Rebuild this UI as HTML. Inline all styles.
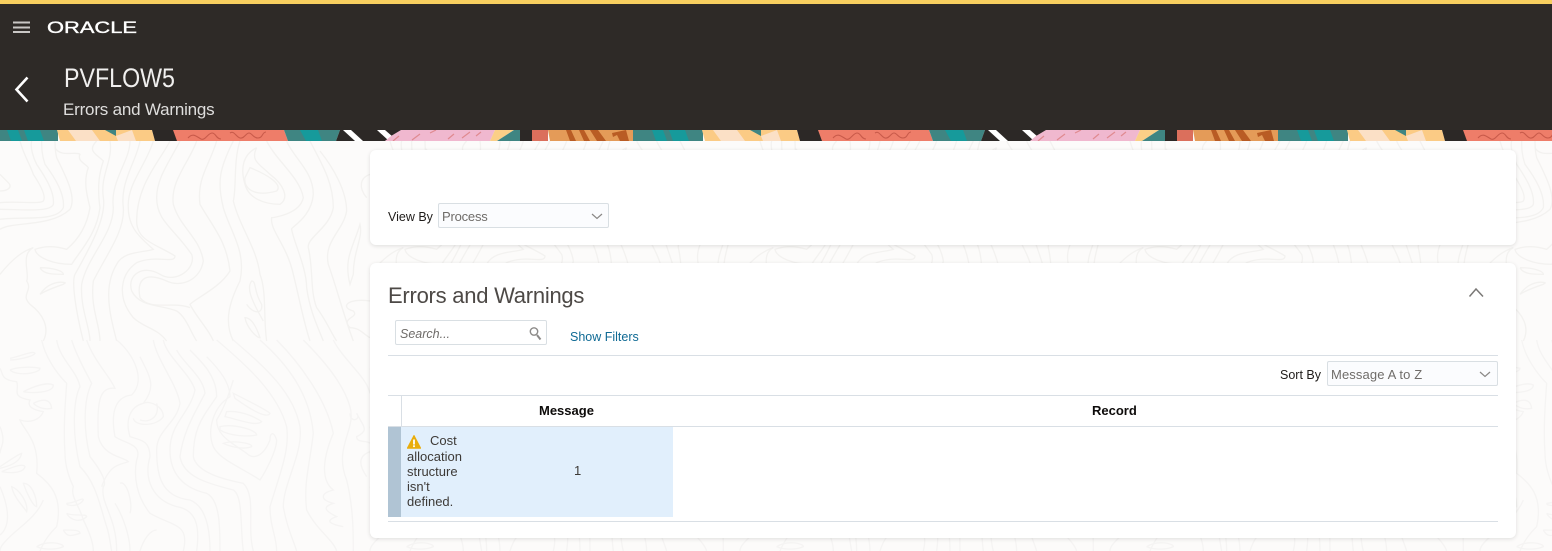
<!DOCTYPE html>
<html><head><meta charset="utf-8"><style>
html,body{margin:0;padding:0;width:1552px;height:551px;overflow:hidden;background:#fcfbfa;font-family:"Liberation Sans",sans-serif}
.a{position:absolute;white-space:nowrap}
.card{position:absolute;left:370px;width:1146px;background:#fff;border-radius:6px;box-shadow:0 1px 4px rgba(0,0,0,.12)}
.sel{position:absolute;box-sizing:border-box;background:#fbfcfe;border:1px solid #d9dfe3;border-radius:2px;color:#6f6c69;font-size:13px}
.ln{position:absolute;background:#d9dfe5;height:1px}
</style></head><body>
<svg class="a" style="left:0;top:141px" width="1552" height="410" fill="none" stroke="#f3f2f0" stroke-width="1.2">
<defs>
<g id="c1" transform="scale(.3333)" stroke-width="4">
<path d="M0 185C50 180 120 190 130 180C140 165 120 130 100 100C90 70 70 40 60 0"/>
<path d="M0 205C60 205 150 215 160 190C165 150 130 100 110 70C100 50 90 20 95 0"/>
<path d="M0 235C60 225 170 245 190 200C195 160 165 110 135 70C125 40 125 20 125 0"/>
<path d="M0 265C40 240 150 260 210 205C230 170 200 110 170 50C165 30 165 15 165 0"/>
<path d="M0 100L25 125C40 140 20 150 0 150"/>
<path d="M165 20C180 50 230 30 240 40C230 60 260 70 265 80C250 120 260 160 270 200C260 260 230 300 200 325C150 310 120 320 105 325C110 350 160 370 215 370C240 330 290 280 300 200C290 130 300 90 310 60C290 40 260 30 290 0"/>
<path d="M330 0C340 60 300 100 310 170C320 230 270 320 225 400C215 420 225 500 250 600"/>
<path d="M390 0C390 60 330 120 340 200C340 280 260 350 245 430C240 500 270 560 270 600"/>
<path d="M420 0C410 60 360 120 370 200C375 270 320 340 280 420C270 500 300 550 300 600"/>
<path d="M460 0C440 70 380 130 385 200C385 260 420 290 460 325C430 335 370 330 350 370C320 420 320 480 340 560L350 600"/>
<path d="M510 0C480 60 410 130 410 240C410 300 470 310 525 345C525 370 470 340 410 365C360 400 350 470 400 530C430 560 470 560 500 600"/>
<path d="M540 0C510 60 470 110 470 170C470 240 520 260 575 340C590 380 530 430 480 400C430 370 380 400 395 450C420 500 480 490 530 510C560 530 570 570 590 600"/>
<path d="M590 0C570 60 510 120 520 190C540 260 600 290 610 360C600 420 540 440 500 420C430 390 410 420 420 470C450 510 520 480 570 500"/>
<path d="M650 0C630 70 590 110 600 190C640 260 680 300 690 390C660 440 590 470 570 490C590 530 630 570 640 600"/>
<path d="M700 0C660 80 650 120 670 200C690 270 740 330 720 420C690 480 670 540 700 600"/>
<path d="M720 0C700 60 710 140 700 180C720 260 770 320 780 400C800 450 790 530 800 600"/>
<path d="M770 20C730 40 720 80 735 130C745 170 790 190 840 190C870 170 850 130 810 100C780 70 750 60 770 20"/>
<path d="M735 110C730 140 760 170 830 150C850 130 800 100 750 80Z"/>
<path d="M800 0C830 60 900 110 910 170C900 220 820 230 815 230C810 270 860 310 880 400C900 480 910 540 930 600"/>
<path d="M860 0C880 50 940 90 940 160C935 230 870 260 875 265C880 300 920 380 920 440C930 510 950 550 970 600"/>
<path d="M930 0C960 60 1000 120 1000 200C990 260 920 290 925 320C940 380 930 450 950 500C980 540 990 570 1010 600"/>
<path d="M960 30C1000 80 1040 150 1040 210C1030 270 970 300 985 370C1010 440 1030 520 1060 600"/>
<path d="M1110 100C1080 110 1075 140 1100 170"/>
<path d="M1050 430C1030 350 1060 320 1080 250C1090 290 1060 330 1060 400Z"/>
<path d="M1110 480C1040 470 1020 500 1060 510C1080 530 1020 530 1050 560C1080 560 1090 580 1110 590"/>
<path d="M0 400C40 350 70 330 100 320C60 340 90 400 80 420C100 450 60 460 90 490C130 520 150 560 130 600"/>
<path d="M120 380C160 380 190 390 190 400C160 400 130 400 120 380"/>
<path d="M120 460C150 440 200 430 195 425C170 420 140 430 120 460"/>
<path d="M740 490C760 520 790 520 785 490C760 450 770 420 755 420C740 440 750 470 790 540"/>
<path d="M735 530C740 560 770 590 780 590C770 560 755 530 735 530Z"/>
</g>
<g id="c2" transform="translate(0,199) scale(.3333)" stroke="#f5f4f3" stroke-width="4">
<path d="M30 60C50 60 100 50 105 40C100 30 60 50 30 55"/>
<path d="M30 90C50 110 120 100 120 85C100 80 50 80 30 90"/>
<path d="M70 155C90 160 160 160 160 135C140 125 100 140 70 155"/>
<path d="M100 190C120 180 150 170 155 205C130 210 110 200 100 190"/>
<path d="M0 85C10 100 0 120 50 125C60 150 30 170 90 180C80 200 100 210 130 215C120 240 90 250 60 240C70 270 120 300 110 400C150 430 190 470 170 560C140 590 130 610 120 633"/>
<path d="M125 0C135 50 170 100 200 130C195 200 190 270 195 340C195 380 210 420 220 440C210 470 240 500 250 540C270 580 280 610 280 633"/>
<path d="M170 0C180 60 230 90 240 140C220 180 215 280 240 380C290 430 300 500 320 560C330 590 330 610 335 633"/>
<path d="M215 0C230 50 260 100 275 130C250 180 250 270 270 350C310 400 320 430 310 440C300 490 350 530 350 633"/>
<path d="M260 0C280 60 330 110 345 145C300 140 290 180 295 290C310 350 370 350 385 365C360 375 330 370 305 440"/>
<path d="M350 0C400 40 440 120 395 165C350 170 330 210 345 290C370 310 430 310 410 360C400 410 410 470 450 520C520 560 570 550 550 633"/>
<path d="M420 50C450 110 470 140 430 190C390 200 375 240 390 290C420 300 450 300 450 350C430 420 460 480 530 500C590 510 600 560 590 633"/>
<path d="M400 235C405 260 470 260 490 230C490 200 450 180 430 190"/>
<path d="M420 240C450 250 480 230 470 190"/>
<path d="M460 0C470 60 530 130 540 190C530 250 470 270 470 330C470 400 480 470 570 480C620 500 630 570 630 633"/>
<path d="M490 0C500 50 570 100 585 150C570 220 510 250 510 330C510 380 530 440 620 460C660 480 660 560 660 633"/>
<path d="M530 30C550 70 610 110 615 160C590 210 550 270 540 350C550 410 620 430 700 450C730 470 720 560 730 633"/>
<path d="M570 30C610 70 650 110 650 170C610 230 580 260 580 350C590 400 680 420 730 430C770 470 740 560 760 633"/>
<path d="M620 50C660 90 690 130 690 170C640 200 620 270 640 320C660 360 720 380 780 420C800 390 830 330 830 300C820 270 810 280 810 300C790 350 760 360 740 340C700 310 650 290 650 240C680 190 690 150 700 120"/>
<path d="M700 160C720 170 800 210 810 220C800 240 740 200 705 175Z"/>
<path d="M680 215C730 210 780 240 785 245C770 260 720 240 675 230Z"/>
<path d="M660 260C700 250 770 270 770 285C750 290 690 290 660 270Z"/>
<path d="M670 310C700 300 760 310 755 320C730 330 690 320 670 310Z"/>
<path d="M650 0C720 60 830 150 860 260C870 330 840 400 810 500C810 560 830 590 830 633"/>
<path d="M700 0C780 70 880 150 900 260C910 340 850 430 850 500C860 560 880 600 890 633"/>
<path d="M780 0C860 70 930 160 940 280C930 370 910 430 920 510C950 570 1000 600 1010 633"/>
<path d="M830 0C900 70 980 180 1000 280C970 350 960 420 1000 450C960 460 960 480 1000 490C970 500 970 510 1010 530C980 540 980 550 1030 560"/>
<path d="M910 0C970 60 1030 130 1050 200C1070 270 1000 320 1040 420C1060 500 1060 580 1060 633"/>
<path d="M1000 0C1030 60 1100 110 1110 160"/>
<path d="M1050 220C1050 250 1085 240 1070 220C1090 260 1110 270 1070 290C1070 310 1100 300 1110 310"/>
<path d="M1110 335C1070 350 1080 380 1100 410"/>
<path d="M0 260C20 310 0 320 0 340"/>
<path d="M0 380C30 360 60 340 65 340C60 370 20 380 0 385"/>
<path d="M5 395C40 380 70 370 75 380C70 400 30 400 5 395"/>
<path d="M35 440C40 470 70 500 80 515C85 490 60 450 35 440Z"/>
<path d="M70 430C80 460 100 500 110 500C110 470 95 430 70 430Z"/>
<path d="M0 440C30 510 30 560 0 585"/>
<path d="M130 480C110 530 60 560 30 590C10 610 0 620 0 633"/>
<path d="M200 490C225 490 250 470 250 480C240 500 200 500 200 490"/>
<path d="M200 520C220 530 260 520 260 530C240 550 210 540 200 520"/>
<path d="M190 570C220 570 240 570 240 580C210 590 200 590 190 570"/>
<path d="M110 620C140 600 190 610 190 620C170 630 130 630 110 620"/>
<path d="M345 490C370 530 390 590 390 633"/>
<path d="M360 430C380 420 400 490 390 520"/>
<path d="M420 633C430 600 450 570 470 570"/>
</g>
</defs>
<use href="#c1"/><use href="#c2"/>
<use href="#c1" x="370"/><use href="#c2" x="370"/>
<use href="#c1" x="740"/><use href="#c2" x="740"/>
<use href="#c1" x="1110"/><use href="#c2" x="1110"/>
<use href="#c1" x="1480"/><use href="#c2" x="1480"/>
</svg>

<div class="a" style="left:0;top:0;width:1552px;height:4px;background:#f8cf5f"></div>
<div class="a" style="left:0;top:4px;width:1552px;height:126px;background:#2e2a27"></div>

<svg class="a" style="left:0;top:130px" width="1552" height="11">
<defs><g id="b">
<rect x="-12" y="0" width="70" height="11" fill="#3f8582"/>
<polygon points="7,0 18,0 22,11 11,11" fill="#169a9b"/>
<polygon points="24,0 40,0 44,11 28,11" fill="#169a9b"/>
<polygon points="57,0 152,0 155,11 60,11" fill="#fbcb85"/>
<polygon points="68,0 92,0 100,11 76,11" fill="#fbe0c6"/>
<polygon points="105,0 116,0 116,6" fill="#3f8582"/>
<polygon points="116,6 132,0 136,11 118,11" fill="#fbe0c6"/>
<polygon points="152,0 174,0 178,11 155,11" fill="#2c2826"/>
<polygon points="173,0 284,0 288,11 177,11" fill="#ee7d69"/>
<path d="M188 8c5-6 9-1 13 1s7-6 11-6 4 6 9 6M230 3c4-3 6 4 10 5s6-5 9-5 4 5 9 5 4-6 8-6" fill="none" stroke="#c85a4a" stroke-width="1.1"/>
<polygon points="284,0 340,0 336,11 288,11" fill="#3f8582"/>
<polygon points="300,0 318,0 322,11 306,11" fill="#169a9b"/>
<polygon points="340,0 392,0 403,0 385,11 336,11" fill="#2c2826"/>
<polygon points="343,0 351,0 363,11 355,11" fill="#fff"/>
<polygon points="377,0 385,0 393,7 389,11" fill="#fff"/>
<polygon points="385,11 391,6 401,0 495,0 490,11" fill="#f0b8cf"/>
<path d="M393 11l6-5M412 10l8-6M430 3l6-3M448 9l6-5M462 8l8-6M476 6l5-4" stroke="#e08a90" stroke-width="1.2" fill="none"/>
<polygon points="495,0 514,0 497,11 490,11" fill="#fbcf87"/>
<polygon points="514,0 520,0 520,11 497,11" fill="#3f8582"/>
<rect x="520" y="0" width="12" height="11" fill="#2c2826"/>
<rect x="532" y="0" width="16" height="11" fill="#db6f5c"/>
<polygon points="548,0 634,0 636,11 550,11" fill="#e49b58"/>
<path d="M566 0h5l5 11h-6zM579 0h5l6 11h-6zM590 0h8l8 11h-9zM612 3l14-3 3 11h-9l-3-6-4 2z" fill="#b95c24"/>
</g></defs>
<use href="#b"/><use href="#b" x="645"/><use href="#b" x="1290"/>
</svg>

<svg class="a" style="left:13px;top:21px" width="18" height="13"><path d="M0 1.5h17M0 6.5h17M0 11h17" stroke="#c9c7c5" stroke-width="2"/></svg>
<svg class="a" style="left:46px;top:18px" width="94" height="18"><text x="1" y="15" font-family="Liberation Sans" font-size="16.5" fill="#fff" stroke="#fff" stroke-width=".35" textLength="90" lengthAdjust="spacingAndGlyphs">ORACLE</text></svg>
<svg class="a" style="left:13px;top:75px" width="18" height="29"><path d="M14.5 2.5L3.5 14.5l11 12" fill="none" stroke="#fff" stroke-width="2.6"/></svg>
<div class="a" style="left:64px;top:62px;font-size:27px;line-height:32px;color:#f0efee;transform:scaleX(.86);transform-origin:0 0">PVFLOW5</div>
<div class="a" style="left:63px;top:99px;font-size:17px;line-height:22px;color:#dfdedd;letter-spacing:-.2px">Errors and Warnings</div>

<div class="card" style="top:150px;height:95px"></div>
<div class="a" style="left:388px;top:209px;font-size:12.5px;line-height:16px;color:#1f1c1a">View By</div>
<div class="sel" style="left:438px;top:203px;width:171px;height:25px;line-height:25px;padding-left:3px;letter-spacing:-.2px">Process</div>
<svg class="a" style="left:591px;top:213px" width="12" height="7"><path d="M1 1l5 4.5L11 1" fill="none" stroke="#8a8886" stroke-width="1.2"/></svg>

<div class="card" style="top:263px;height:275px"></div>
<div class="a" style="left:388px;top:282px;font-size:22px;line-height:27px;color:#4d4946;letter-spacing:-.25px">Errors and Warnings</div>
<svg class="a" style="left:1468px;top:287px" width="17" height="11"><path d="M1.5 9.5L8 2l7 7.5" fill="none" stroke="#7a7876" stroke-width="1.5"/></svg>

<div class="a" style="left:395px;top:320px;width:152px;height:25px;box-sizing:border-box;border:1px solid #d9dfe3;border-radius:2px;background:#fff"></div>
<div class="a" style="left:400px;top:327px;font-size:12.5px;line-height:15px;font-style:italic;color:#6f6c69">Search...</div>
<svg class="a" style="left:529px;top:326px" width="13" height="15"><circle cx="5" cy="5.5" r="3.7" fill="none" stroke="#8c8a88" stroke-width="1.4"/><path d="M8 9l3.5 4.5" stroke="#8c8a88" stroke-width="2"/></svg>
<div class="a" style="left:570px;top:330px;font-size:12.5px;line-height:15px;color:#0f6a94">Show Filters</div>

<div class="ln" style="left:388px;top:355px;width:1110px"></div>
<div class="a" style="left:1280px;top:368px;font-size:12.5px;line-height:15px;color:#1f1c1a">Sort By</div>
<div class="sel" style="left:1327px;top:361px;width:171px;height:25px;line-height:25px;padding-left:3px;letter-spacing:.12px">Message A to Z</div>
<svg class="a" style="left:1479px;top:371px" width="12" height="7"><path d="M1 1l5 4.5L11 1" fill="none" stroke="#8a8886" stroke-width="1.2"/></svg>

<div class="ln" style="left:388px;top:395px;width:1110px"></div>
<div class="ln" style="left:388px;top:426px;width:1110px"></div>
<div class="a" style="left:401px;top:395px;width:1px;height:31px;background:#d9dfe5"></div>
<div class="a" style="left:539px;top:403px;font-size:13px;line-height:15px;font-weight:bold;color:#0d0b0a">Message</div>
<div class="a" style="left:1092px;top:403px;font-size:13px;line-height:15px;font-weight:bold;color:#0d0b0a">Record</div>

<div class="a" style="left:388px;top:427px;width:285px;height:90px;background:#e1effc"></div>
<div class="a" style="left:388px;top:427px;width:13px;height:90px;background:#b0c4d4"></div>
<svg class="a" style="left:407px;top:435px" width="14" height="14"><polygon points="7,.5 13.7,13.2 .3,13.2" fill="#e9ad0c" stroke="#e9ad0c" stroke-linejoin="round"/><rect x="6.1" y="4.5" width="1.8" height="5" fill="#fff"/><rect x="6.1" y="10.3" width="1.8" height="1.8" fill="#fff"/></svg>
<div class="a" style="left:430px;top:433px;font-size:13px;line-height:15px;color:#3d3a37">Cost</div>
<div class="a" style="left:407px;top:449px;font-size:13px;line-height:15px;color:#3d3a37">allocation<br>structure<br>isn't<br>defined.</div>
<div class="a" style="left:574px;top:463px;font-size:13px;line-height:15px;color:#3d3a37">1</div>
<div class="ln" style="left:388px;top:521px;width:1110px"></div>
</body></html>
